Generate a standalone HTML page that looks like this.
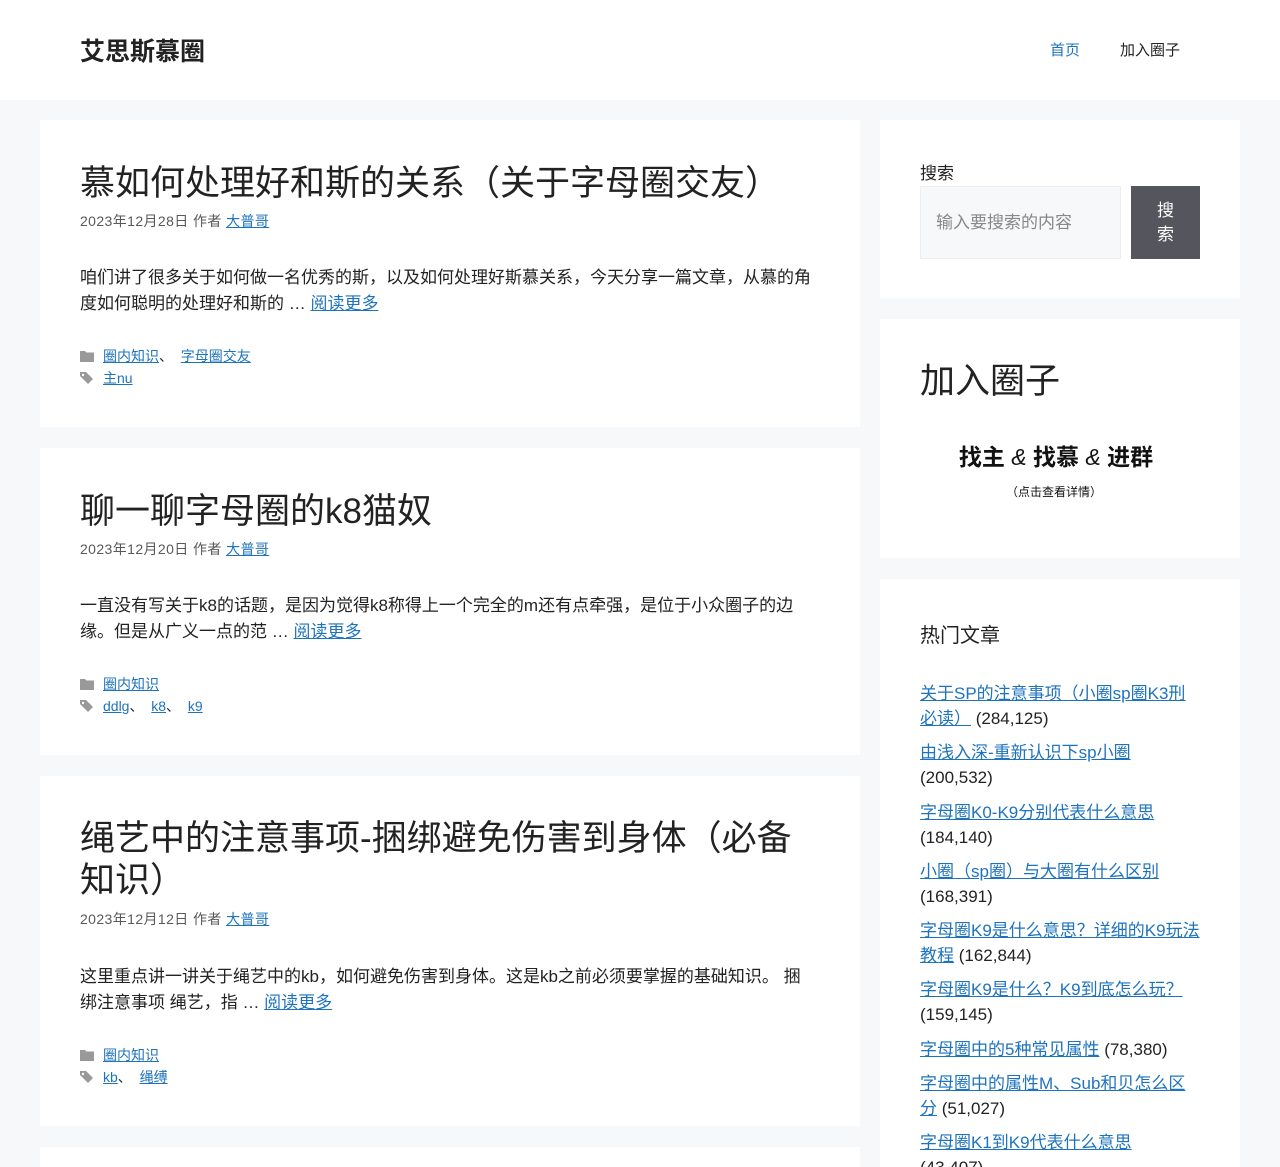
<!DOCTYPE html>
<html><head><meta charset="utf-8">
<style>
*{box-sizing:border-box;margin:0;padding:0}
html,body{width:1280px;height:1167px;overflow:hidden}
body{background:#f7f8f9;font-family:"Liberation Sans","Noto Sans CJK SC",sans-serif;color:#222;font-size:17px;position:relative}
a{color:#1e73be;text-decoration:underline}
.hdr{position:absolute;left:0;top:0;width:1280px;height:100px;background:#fff}
.logo{position:absolute;left:80px;top:36px;font-size:25px;font-weight:bold;color:#222;line-height:32px}
.nav{position:absolute;top:41px;font-size:15px;line-height:20px}
.card{position:absolute;background:#fff;left:40px;width:820px}
.abs{position:absolute;white-space:nowrap}
.meta{font-size:14px;color:#595959;line-height:20px;letter-spacing:0.4px}
.ex{font-size:17px;line-height:26px;color:#222}
.tax{font-size:14px;line-height:22px}
.ic{display:inline-block;width:14px;height:12px;vertical-align:-1px;margin-right:9px}
.side{position:absolute;left:880px;width:360px;background:#fff}
.pop{position:absolute;left:920px;top:681px;font-size:17px;line-height:25px;color:#222}
.pop div{margin-bottom:9.3px;white-space:nowrap}
</style></head><body>
<div class="hdr">
<div class="logo">艾思斯慕圈</div>
<div class="nav" style="left:1050px;color:#1e73be">首页</div>
<div class="nav" style="left:1120px;color:#222">加入圈子</div>
</div>

<div class="card" style="top:120px;height:307px"></div>
<div class="card" style="top:448px;height:307px"></div>
<div class="card" style="top:776px;height:350px"></div>
<div class="card" style="top:1147px;height:20px"></div>

<!-- post 1 -->
<div class="abs" style="left:80px;top:161px;font-size:35px;line-height:46px">慕如何处理好和斯的关系（关于字母圈交友）</div>
<div class="abs meta" style="left:80px;top:211px">2023年12月28日 作者 <a href="#">大普哥</a></div>
<div class="abs ex" style="left:80px;top:265px">咱们讲了很多关于如何做一名优秀的斯，以及如何处理好斯慕关系，今天分享一篇文章，从慕的角<br>度如何聪明的处理好和斯的 … <a href="#">阅读更多</a></div>
<div class="abs tax" style="left:80px;top:345px"><svg class="ic" viewBox="0 0 14 12"><path d="M0 1h5l1.5 1.5H14V12H0z" fill="#999"/></svg><a href="#">圈内知识</a>、 &nbsp;<a href="#">字母圈交友</a><br><svg class="ic" viewBox="0 0 14 12"><path d="M0 0h6l7 7-5 5-8-8z" fill="#999"/><circle cx="3" cy="3" r="1.2" fill="#fff"/></svg><a href="#">主nu</a></div>

<!-- post 2 -->
<div class="abs" style="left:80px;top:489px;font-size:35px;line-height:46px">聊一聊字母圈的k8猫奴</div>
<div class="abs meta" style="left:80px;top:539px">2023年12月20日 作者 <a href="#">大普哥</a></div>
<div class="abs ex" style="left:80px;top:593px">一直没有写关于k8的话题，是因为觉得k8称得上一个完全的m还有点牵强，是位于小众圈子的边<br>缘。但是从广义一点的范 … <a href="#">阅读更多</a></div>
<div class="abs tax" style="left:80px;top:673px"><svg class="ic" viewBox="0 0 14 12"><path d="M0 1h5l1.5 1.5H14V12H0z" fill="#999"/></svg><a href="#">圈内知识</a><br><svg class="ic" viewBox="0 0 14 12"><path d="M0 0h6l7 7-5 5-8-8z" fill="#999"/><circle cx="3" cy="3" r="1.2" fill="#fff"/></svg><a href="#">ddlg</a>、 &nbsp;<a href="#">k8</a>、 &nbsp;<a href="#">k9</a></div>

<!-- post 3 -->
<div class="abs" style="left:80px;top:818px;font-size:35px;line-height:42px">绳艺中的注意事项-捆绑避免伤害到身体（必备<br>知识）</div>
<div class="abs meta" style="left:80px;top:909px">2023年12月12日 作者 <a href="#">大普哥</a></div>
<div class="abs ex" style="left:80px;top:964px">这里重点讲一讲关于绳艺中的kb，如何避免伤害到身体。这是kb之前必须要掌握的基础知识。 捆<br>绑注意事项 绳艺，指 … <a href="#">阅读更多</a></div>
<div class="abs tax" style="left:80px;top:1044px"><svg class="ic" viewBox="0 0 14 12"><path d="M0 1h5l1.5 1.5H14V12H0z" fill="#999"/></svg><a href="#">圈内知识</a><br><svg class="ic" viewBox="0 0 14 12"><path d="M0 0h6l7 7-5 5-8-8z" fill="#999"/><circle cx="3" cy="3" r="1.2" fill="#fff"/></svg><a href="#">kb</a>、 &nbsp;<a href="#">绳缚</a></div>

<!-- sidebar -->
<div class="side" style="top:120px;height:178px"></div>
<div class="abs" style="left:920px;top:162px;font-size:17px;line-height:24px">搜索</div>
<div class="abs" style="left:920px;top:186px;width:201px;height:73px;background:#f7f8f9;border:1px solid #eee;color:#888;font-size:17px;line-height:71px;padding-left:15px">输入要搜索的内容</div>
<div class="abs" style="left:1131px;top:186px;width:69px;height:73px;background:#55555e;color:#fff;font-size:17px;line-height:24px;text-align:center;padding-top:13px">搜<br>索</div>

<div class="side" style="top:319px;height:239px"></div>
<div class="abs" style="left:920px;top:359px;font-size:35px;line-height:46px">加入圈子</div>
<div class="abs" style="left:876px;width:360px;top:441px;text-align:center;font-size:23px;font-weight:bold;line-height:32px;color:#111">找主 <i style="font-weight:normal">&amp;</i> 找慕 <i style="font-weight:normal">&amp;</i> 进群</div>
<div class="abs" style="left:874px;width:360px;top:483px;text-align:center;font-size:12px;line-height:18px;color:#111">（点击查看详情）</div>

<div class="side" style="top:579px;height:600px"></div>
<div class="abs" style="left:920px;top:622px;font-size:20px;line-height:28px">热门文章</div>
<div class="pop">
<div><a href="#">关于SP的注意事项（小圈sp圈K3刑<br>必读）</a> (284,125)</div>
<div><a href="#">由浅入深-重新认识下sp小圈</a><br>(200,532)</div>
<div><a href="#">字母圈K0-K9分别代表什么意思</a><br>(184,140)</div>
<div><a href="#">小圈（sp圈）与大圈有什么区别</a><br>(168,391)</div>
<div><a href="#">字母圈K9是什么意思？详细的K9玩法<br>教程</a> (162,844)</div>
<div><a href="#">字母圈K9是什么？K9到底怎么玩？</a><br>(159,145)</div>
<div><a href="#">字母圈中的5种常见属性</a> (78,380)</div>
<div><a href="#">字母圈中的属性M、Sub和贝怎么区<br>分</a> (51,027)</div>
<div><a href="#">字母圈K1到K9代表什么意思</a><br>(43,407)</div>
</div>
</body></html>
